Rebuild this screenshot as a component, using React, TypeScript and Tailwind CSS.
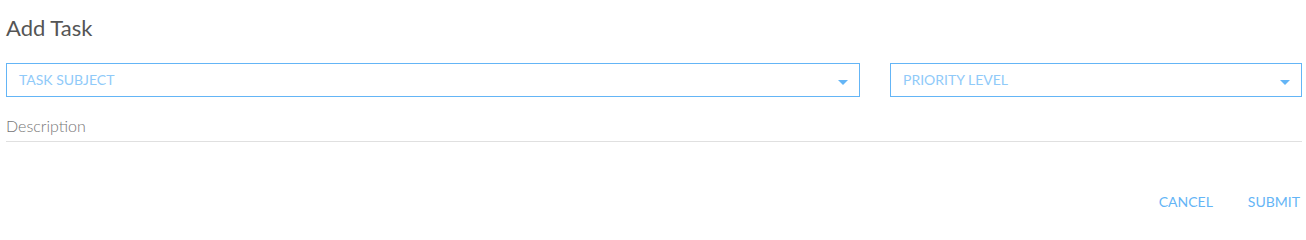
import React from "react";

function Caret() {
  return (
    <svg width="10" height="5" viewBox="0 0 10 5" className="shrink-0 mt-[4px]">
      <path d="M0 0 L10 0 L5 5 Z" fill="#64b5f6" />
    </svg>
  );
}

function Select({ label, className }: { label: string; className: string }) {
  return (
    <div
      className={`${className} h-[34px] border border-[#64b5f6] flex items-center justify-between pl-[12px] pr-[11px]`}
    >
      <span className="text-[14px] text-[#90caf9] leading-none">{label}</span>
      <Caret />
    </div>
  );
}

export default function App() {
  return (
    <div
      className="w-[1306px] h-[214px] bg-white pl-[6px] pr-[4px] pt-[13px] flex flex-col"
      style={{ fontFamily: "Lato, 'Open Sans', sans-serif" }}
    >
      <h1 className="text-[22px] text-[#555555] font-normal leading-[30px]">Add Task</h1>
      <div className="flex mt-[20px] gap-[30px]">
        <Select label="TASK SUBJECT" className="w-[854px]" />
        <Select label="PRIORITY LEVEL" className="flex-1" />
      </div>
      <div className="mt-[17px]">
        <div className="text-[16px] text-[#757575] font-light leading-[24px] border-b border-[#e0e0e0] pb-[3px]">
          Description
        </div>
      </div>
      <div className="flex justify-end gap-[35px] mt-[53px] pr-[2px]">
        <button className="text-[14px] text-[#64b5f6] leading-none">CANCEL</button>
        <button className="text-[14px] text-[#64b5f6] leading-none">SUBMIT</button>
      </div>
    </div>
  );
}
